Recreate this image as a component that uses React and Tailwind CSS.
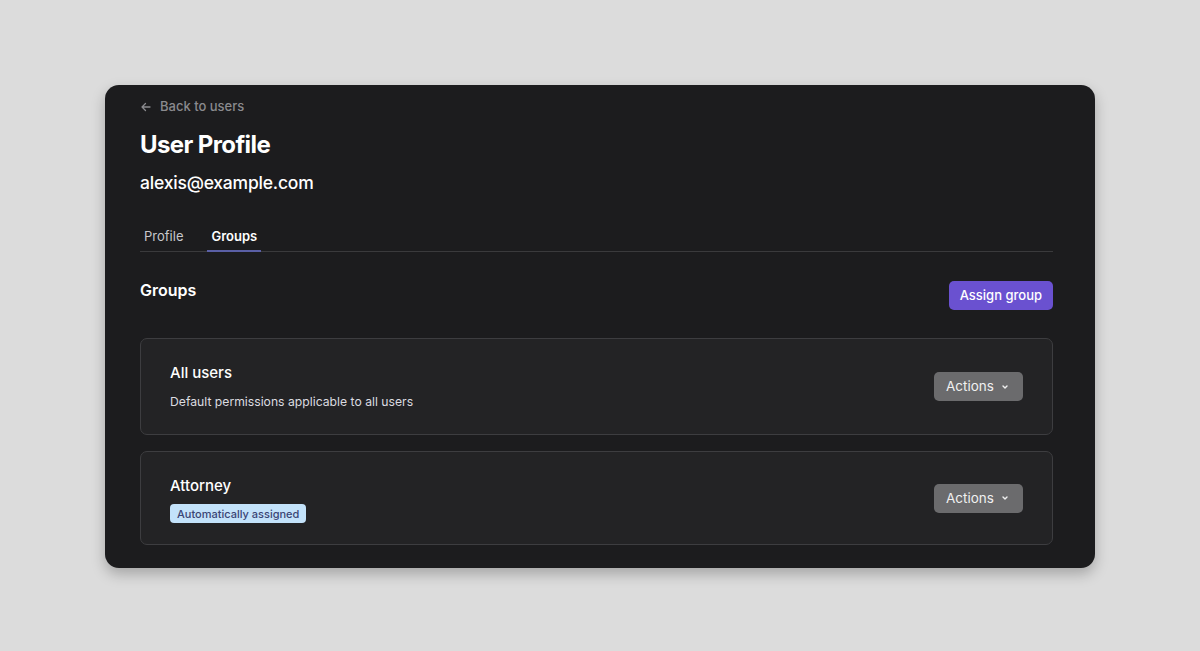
import React from "react";

function ChevronDown() {
  return (
    <svg width="10" height="10" viewBox="0 0 10 10" fill="none" stroke="currentColor" strokeWidth="1.4" strokeLinecap="round" strokeLinejoin="round">
      <path d="M3 4l2 2 2-2" />
    </svg>
  );
}

function ArrowLeft() {
  return (
    <svg width="12" height="12" viewBox="0 0 12 12" fill="none" stroke="currentColor" strokeWidth="1.3" strokeLinecap="round" strokeLinejoin="round">
      <path d="M10 6H2M5.5 2.5L2 6l3.5 3.5" />
    </svg>
  );
}

function ActionsButton() {
  return (
    <button className="flex items-center h-[29px] w-[89px] pl-[12px] pr-[13px] justify-between rounded-[5px] bg-[#6b6b6d] text-[13.5px] text-[#f0f0f0]">
      <span>Actions</span>
      <ChevronDown />
    </button>
  );
}

export default function App() {
  return (
    <div
      className="w-[1200px] h-[651px] bg-[#dcdcdc] flex justify-center pt-[85px]"
      style={{ fontFamily: "Inter, 'Noto Sans', sans-serif" }}
    >
      <div className="w-[990px] h-[483px] bg-[#1c1c1e] rounded-[14px] shadow-[0_6px_14px_rgba(0,0,0,0.25)] pl-[35px] pr-[42px] pt-[14px]">
        <div className="flex items-center gap-[8px] text-[#8a8a8e] text-[13px] font-medium h-[16px]">
          <ArrowLeft />
          <span>Back to users</span>
        </div>
        <h1 className="mt-[14px] text-[24px] leading-[32px] font-bold tracking-[-0.6px] text-white">User Profile</h1>
        <div className="mt-[10px] text-[17.5px] leading-[24px] font-medium text-white tracking-[-0.2px]">alexis@example.com</div>

        <div className="mt-[26px] flex border-b border-[#3a3a3c] h-[31px] text-[13px]">
          <div className="px-[4px] pt-[6px] text-[#c8c8cc]">Profile</div>
          <div className="ml-[20px] px-[4px] pt-[6px] font-semibold text-white border-b-[2px] border-[#5a5fa6] -mb-px">Groups</div>
        </div>

        <div className="mt-[29px] flex justify-between items-start">
          <h2 className="text-[16px] leading-[18px] font-semibold text-white">Groups</h2>
          <button className="h-[29px] px-[11px] rounded-[5px] bg-[#6a51d0] text-[13px] font-medium text-white">Assign group</button>
        </div>

        <div className="mt-[28px] flex flex-col gap-[16px]">
          <div className="h-[97px] rounded-[7px] border border-[#3d3d40] bg-[#232325] flex items-center justify-between pl-[29px] pr-[29px]">
            <div>
              <div className="text-[15px] leading-[20px] font-medium text-white">All users</div>
              <div className="mt-[10px] text-[12.2px] leading-[17px] text-[#dcdce0]">Default permissions applicable to all users</div>
            </div>
            <ActionsButton />
          </div>
          <div className="h-[94px] rounded-[7px] border border-[#3d3d40] bg-[#232325] flex items-center justify-between pl-[29px] pr-[29px]">
            <div className="pt-[4px]">
              <div className="text-[15px] leading-[20px] font-medium text-white">Attorney</div>
              <div className="mt-[8px] inline-flex items-center h-[19px] px-[7px] rounded-[4px] bg-[#c3e2fa] text-[11px] font-medium text-[#3a4574]">Automatically assigned</div>
            </div>
            <ActionsButton />
          </div>
        </div>
      </div>
    </div>
  );
}
